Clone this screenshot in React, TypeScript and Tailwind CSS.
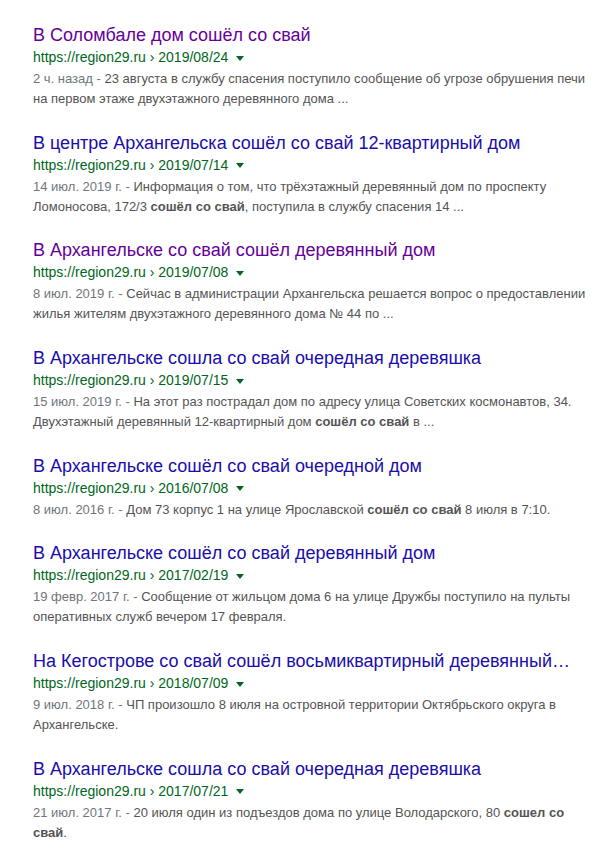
import React from 'react';

type Result = {
  title: string;
  path: string;
  date: string;
  visited?: boolean;
  lines: React.ReactNode[];
};

const results: Result[] = [
  {
    title: 'В Соломбале дом сошёл со свай',
    path: '2019/08/24',
    date: '2 ч. назад',
    visited: true,
    lines: [
      <>23 августа в службу спасения поступило сообщение об угрозе обрушения печи</>,
      <>на первом этаже двухэтажного деревянного дома ...</>,
    ],
  },
  {
    title: 'В центре Архангельска сошёл со свай 12-квартирный дом',
    path: '2019/07/14',
    date: '14 июл. 2019 г.',
    lines: [
      <>Информация о том, что трёхэтажный деревянный дом по проспекту</>,
      <>Ломоносова, 172/3 <b>сошёл со свай</b>, поступила в службу спасения 14 ...</>,
    ],
  },
  {
    title: 'В Архангельске со свай сошёл деревянный дом',
    path: '2019/07/08',
    date: '8 июл. 2019 г.',
    visited: true,
    lines: [
      <>Сейчас в администрации Архангельска решается вопрос о предоставлении</>,
      <>жилья жителям двухэтажного деревянного дома № 44 по ...</>,
    ],
  },
  {
    title: 'В Архангельске сошла со свай очередная деревяшка',
    path: '2019/07/15',
    date: '15 июл. 2019 г.',
    lines: [
      <>На этот раз пострадал дом по адресу улица Советских космонавтов, 34.</>,
      <>Двухэтажный деревянный 12-квартирный дом <b>сошёл со свай</b> в ...</>,
    ],
  },
  {
    title: 'В Архангельске сошёл со свай очередной дом',
    path: '2016/07/08',
    date: '8 июл. 2016 г.',
    lines: [<>Дом 73 корпус 1 на улице Ярославской <b>сошёл со свай</b> 8 июля в 7:10.</>],
  },
  {
    title: 'В Архангельске сошёл со свай деревянный дом',
    path: '2017/02/19',
    date: '19 февр. 2017 г.',
    lines: [
      <>Сообщение от жильцом дома 6 на улице Дружбы поступило на пульты</>,
      <>оперативных служб вечером 17 февраля.</>,
    ],
  },
  {
    title: 'На Кегострове со свай сошёл восьмиквартирный деревянный…',
    path: '2018/07/09',
    date: '9 июл. 2018 г.',
    lines: [
      <>ЧП произошло 8 июля на островной территории Октябрьского округа в</>,
      <>Архангельске.</>,
    ],
  },
  {
    title: 'В Архангельске сошла со свай очередная деревяшка',
    path: '2017/07/21',
    date: '21 июл. 2017 г.',
    lines: [
      <>20 июля один из подъездов дома по улице Володарского, 80 <b>сошел со</b></>,
      <><b>свай</b>.</>,
    ],
  },
];

export default function App() {
  return (
    <div className="min-h-[864px] bg-white pl-[33px] pt-[24px] font-['Liberation_Sans',Arial,sans-serif]">
      <div className="flex w-[560px] flex-col gap-[22.7px]">
        {results.map((r, i) => (
          <div key={i}>
            <h3
              className={`whitespace-nowrap text-[18px] leading-[22px] ${r.visited ? 'text-[#660099]' : 'text-[#1a0dab]'}`}
            >
              {r.title}
            </h3>
            <div className="flex items-center text-[14px] leading-[23px] text-[#006621]">
              <span>https://region29.ru › {r.path}</span>
              <span className="ml-[8px] mt-[1px] h-0 w-0 border-x-[4px] border-t-[5px] border-x-transparent border-t-[#006621]" />
            </div>
            <div className="whitespace-nowrap text-[13px] leading-[20px] text-[#545454]">
              <span className="text-[#70757a]">{r.date} - </span>
              {r.lines.map((line, j) => (
                <React.Fragment key={j}>
                  {j > 0 && <br />}
                  {line}
                </React.Fragment>
              ))}
            </div>
          </div>
        ))}
      </div>
    </div>
  );
}
